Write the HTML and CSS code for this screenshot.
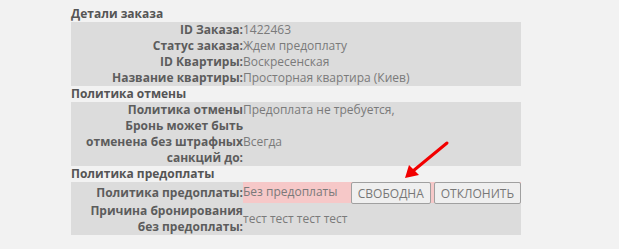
FILE: index.html
```html
<!DOCTYPE html>
<html lang="ru">
<head>
    <meta charset="UTF-8">
    <title>Детали заказа</title>
    <link rel="stylesheet" href="styles.css">
</head>
<body>
    <div class="page">
        <div class="section-title">Детали заказа</div>
        <table class="info">
            <tr><td class="label">ID Заказа:</td><td class="value">1422463</td></tr>
            <tr><td class="label">Статус заказа:</td><td class="value">Ждем предоплату</td></tr>
            <tr><td class="label">ID Квартиры:</td><td class="value">Воскресенская</td></tr>
            <tr><td class="label">Название квартиры:</td><td class="value">Просторная квартира (Киев)</td></tr>
        </table>

        <div class="section-title">Политика отмены</div>
        <table class="info">
            <tr><td class="label">Политика отмены</td><td class="value">Предоплата не требуется,</td></tr>
            <tr><td class="label">Бронь может быть отменена без штрафных санкций до:</td><td class="value middle">Всегда</td></tr>
        </table>

        <div class="section-title">Политика предоплаты</div>
        <table class="info">
            <tr>
                <td class="label">Политика предоплаты:</td>
                <td class="value warn">
                    <div class="warn-row">
                        <span>Без предоплаты</span>
                        <div class="actions">
                            <button class="btn">Свободна</button>
                            <button class="btn">Отклонить</button>
                        </div>
                    </div>
                </td>
            </tr>
            <tr><td class="label">Причина бронирования без предоплаты:</td><td class="value middle">тест тест тест тест</td></tr>
        </table>

        <!-- стрелка-подсказка поверх таблицы -->
        <svg class="arrow" width="60" height="50" viewBox="0 0 60 50">
            <line x1="52" y1="5" x2="18" y2="33" stroke="#f20000" stroke-width="3" stroke-linecap="round"/>
            <polygon points="10,40 14,27 24,37" fill="#f20000"/>
        </svg>
    </div>
</body>
</html>
```

FILE: styles.css
```css
body {
    margin: 0;
    background-color: #f2f2f2;
    font-family: "Open Sans", Arial, sans-serif;
    font-size: 12px;
    line-height: 16px;
    color: #666;
}

.page {
    position: relative;
    width: 450px;
    padding: 6px 0 0 71px;
}

.section-title {
    font-weight: bold;
    color: #555;
    height: 16px;
}

.info {
    width: 450px;
    border-collapse: collapse;
    background-color: #dcdcdc;
}
.info td {
    padding: 0;
}
.label {
    width: 172px;
    text-align: right;
    font-weight: bold;
    color: #5c5c5c;
    vertical-align: middle;
}
.value {
    color: #7a7a7a;
    vertical-align: top;
}
.value.middle {
    vertical-align: middle;
}

.warn {
    background-color: #f6c8c8;
}
.warn-row {
    display: flex;
    justify-content: space-between;
    align-items: flex-start;
    padding-top: 2px;
}
.actions {
    display: flex;
    gap: 3px;
    margin-top: -2px;
    margin-bottom: -1px;
}
.btn {
    height: 22px;
    padding: 0 6px;
    font-family: "Open Sans", Arial, sans-serif;
    font-size: 12px;
    text-transform: uppercase;
    color: #777;
    background-color: #efefef;
    border: 1px solid #a0a0a0;
    border-radius: 2px;
}

.arrow {
    position: absolute;
    left: 395px;
    top: 138px;
}
```
